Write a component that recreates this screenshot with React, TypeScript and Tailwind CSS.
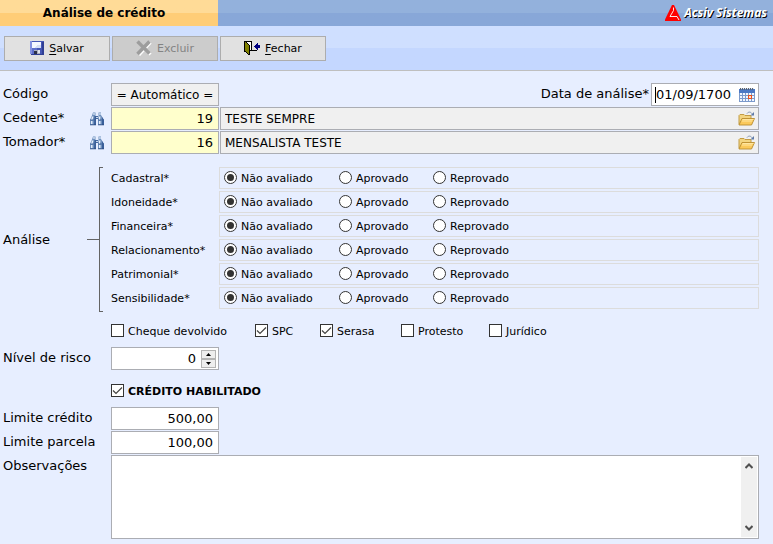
import type { ReactNode } from "react";

const fieldBox = "h-[23px] border border-[#abadb3] leading-5 text-black outline-none";

function SaveIcon() {
  return (
    <svg width="14" height="14" viewBox="0 0 14 14" shapeRendering="crispEdges" aria-hidden="true">
      <path d="M0 0h14v14H1l-1-1z" fill="#4456b4" />
      <path d="M0 0h2v13H0z" fill="#8391e0" />
      <path d="M2 7h5v7H2z" fill="#5d6ecb" />
      <path d="M12 1h2v13h-2zM1 13h13v1H1z" fill="#303f94" />
      <path d="M2 1h9v6H2z" fill="#f4f7ff" />
      <path d="M7 4h4v3H5z" fill="#d5def5" />
      <path d="M4 9h6v4H4z" fill="#a9adbd" />
      <path d="M4 10h3v3H4z" fill="#2b3047" />
      <path d="M8 9h2v3H8z" fill="#dfe3ee" />
    </svg>
  );
}

function DeleteIcon() {
  return (
    <svg width="16" height="16" viewBox="0 0 16 16" aria-hidden="true">
      <path d="M3 3l11.500 11.500M14.500 2.500L3 15" stroke="#ffffff" strokeWidth="3" fill="none" />
      <path d="M1.500 1.500L13.500 13.500M13.500 1.500L1.500 14" stroke="#9d9d9d" strokeWidth="3.500" fill="none" />
    </svg>
  );
}

function ExitIcon() {
  return (
    <svg width="16" height="16" viewBox="0 0 16 16" shapeRendering="crispEdges" aria-hidden="true">
      <path d="M0 1h8v1H0zM0 1h1v11H0zM7 1h1v10H7zM5 10h8v1H5z" fill="#000" />
      <path d="M3 2h4v8H3z" fill="#fff" />
      <path d="M1 2h1v1h1v1h1v1h1v9H4v-1H3v-1H2v-1H1z" fill="#808000" />
      <path d="M2 2h1v1H2zM3 3h1v1H3zM4 4h1v1H4zM5 5h1v10H5zM1 11h1v1H1zM2 12h1v1H2zM3 13h1v1H3zM4 14h1v1H4z" fill="#000" />
      <path d="M10 6h1V5h1V4h1V3h1v2h2v3h-2v2h-1V9h-1V8h-1V7h-1z" fill="#000080" />
    </svg>
  );
}

function BinocularsIcon() {
  return (
    <svg width="16" height="14" viewBox="0 0 16 14" aria-hidden="true">
      <path d="M4 0.500h2.500v3L7 7v6H1V8l2-4.500zM9.500 0.500H12V3l3 5v5H9V7l0.500-3z" fill="#6e8fbd" />
      <path d="M4 1h2v2H4zM10 1h2v2h-2z" fill="#b4c8e2" />
      <path d="M3 4.500h1.500L3.500 8H2zM10 4.500h1.500L11 8h-1z" fill="#e6effa" />
      <path d="M2 9h1.500v3H2zM10 9h1.500v3H10z" fill="#e3edf9" />
      <path d="M5.500 4H7v9H5zM13 5l2 3v5h-2z" fill="#3a5f99" />
      <path d="M7 4h2v3H7z" fill="#44689f" />
      <path d="M7 5h2v1H7z" fill="#c9d9ee" />
      <path d="M1 8h6M9 8h6" stroke="#3f639b" strokeWidth="0.800" />
      <path d="M1 12.500h6v0.800H1zM9 12.500h6v0.800H9z" fill="#2b4b80" />
    </svg>
  );
}

function FolderIcon() {
  return (
    <svg width="17" height="15" viewBox="0 0 17 15" aria-hidden="true">
      <path d="M1 13.500V4.500l1-1h4l1 1h6v3" fill="#f3d581" stroke="#c29c45" />
      <path d="M1 14l3-6.500h12.500l-3 6.500z" fill="#fbc95a" stroke="#b98c2f" strokeWidth="0.900" />
      <path d="M4.500 8.500h11M3.800 10h10.500" stroke="#ffe6a0" />
      <path d="M9 2.500c1.500-2 4-2 5.500 1" fill="none" stroke="#8497b5" />
      <path d="M12.500 4.500H16V1z" fill="#5f7ba8" />
    </svg>
  );
}

function CalendarIcon() {
  return (
    <svg width="16" height="14" viewBox="0 0 16 14" shapeRendering="crispEdges" aria-hidden="true">
      <path d="M0 1h16v13H0z" fill="#7c9acb" />
      <path d="M0 1h16v4H0z" fill="#4b78c4" />
      <path d="M1 0h1v2H1zM3 0h1v2H3zM5 0h1v2H5zM7 0h1v2H7zM9 0h1v2H9zM11 0h1v2h-1zM13 0h1v2h-1z" fill="#5b6470" />
      <path d="M2 0h1v1H2zM4 0h1v1H4zM6 0h1v1H6zM8 0h1v1H8zM10 0h1v1h-1zM12 0h1v1h-1zM14 0h1v1h-1z" fill="#e6ebf3" />
      {[5, 8, 11].map((y) =>
        [1, 4, 7, 10, 13].map((x) => <rect key={`${x}-${y}`} x={x} y={y} width="2" height="2" fill="#f2f7ff" />),
      )}
      <path d="M9 7h4v4H9z" fill="#e8501e" />
      <path d="M10 8h2v2h-2z" fill="#ffe1cf" />
    </svg>
  );
}

function LogoIcon() {
  return (
    <svg width="16" height="16" viewBox="0 0 16 16" aria-hidden="true">
      <path d="M7 0h2l7 14.500V16H0v-1.500z" fill="#ff0000" />
      <path d="M8.500 2.500v3L5 11.500h7l2 3.500" fill="none" stroke="#ffffff" strokeWidth="0.900" />
    </svg>
  );
}

function ToolButton({ icon, hotkey, rest, disabled }: { icon: ReactNode; hotkey: string; rest: string; disabled?: boolean }) {
  return (
    <button
      type="button"
      disabled={disabled}
      className="flex h-[25px] w-[106px] items-center justify-center gap-[5px] border border-[#adadad] bg-[#e1e1e1] pb-px text-[11px] text-black disabled:bg-[#cccccc] disabled:text-[#838383]"
    >
      {icon}
      <span className="pt-[3px]">
        <span className="underline underline-offset-2">{hotkey}</span>
        {rest}
      </span>
    </button>
  );
}

function Row({ label, htmlFor, children }: { label: string; htmlFor?: string; children: ReactNode }) {
  return (
    <div className="flex">
      <label htmlFor={htmlFor} className="h-[23px] w-[108px] shrink-0 text-[13px] leading-[22px]">
        {label}
      </label>
      {children}
    </div>
  );
}

function LookupRow({ id, label, code, name }: { id: string; label: string; code: string; name: string }) {
  return (
    <div className="flex">
      <label htmlFor={id} className="w-[86px] shrink-0 text-[13px] leading-[22px]">
        {label}
      </label>
      <button type="button" aria-label={`Procurar ${label}`} className="flex w-[22px] shrink-0 items-center">
        <BinocularsIcon />
      </button>
      <input id={id} defaultValue={code} className={`${fieldBox} w-[108px] bg-[#ffffcc] pr-[5px] text-right text-[13px]`} />
      <div className="ml-px flex h-[23px] flex-1 items-center border border-[#abadb3] bg-[#f0f0f0] pr-[3px]">
        <input readOnly aria-label={`Nome ${label}`} defaultValue={name} className="h-5 min-w-0 flex-1 pl-1 text-[12px] outline-none" />
        <button type="button" aria-label={`Abrir ${label}`}>
          <FolderIcon />
        </button>
      </div>
    </div>
  );
}

function Radio({ name, label, checked, width }: { name: string; label: string; checked?: boolean; width: string }) {
  return (
    <label className={`flex items-start gap-1 pt-[3px] leading-4 ${width}`}>
      <span className="grid place-items-center">
        <input
          type="radio"
          name={name}
          defaultChecked={checked}
          className="peer col-start-1 row-start-1 size-[13px] appearance-none rounded-full border border-[#333333] bg-white"
        />
        <span className="pointer-events-none col-start-1 row-start-1 hidden size-[7px] rounded-full bg-[#333333] peer-checked:block" />
      </span>
      {label}
    </label>
  );
}

function Check({ label, checked, className = "" }: { label: string; checked?: boolean; className?: string }) {
  return (
    <label className={`flex items-start gap-1 pt-[2px] text-[11px] leading-4 ${className}`}>
      <span className="grid place-items-center">
        <input
          type="checkbox"
          defaultChecked={checked}
          className="peer col-start-1 row-start-1 size-[13px] appearance-none border border-[#333333] bg-white"
        />
        <svg width="11" height="11" viewBox="0 0 11 11" className="pointer-events-none col-start-1 row-start-1 hidden peer-checked:block" aria-hidden="true">
          <path d="M1 5.500l3 3 6-6" fill="none" stroke="#444444" strokeWidth="1.200" />
        </svg>
      </span>
      {label}
    </label>
  );
}

const criteria = ["Cadastral", "Idoneidade", "Financeira", "Relacionamento", "Patrimonial", "Sensibilidade"];

export default function App() {
  return (
    <div className="min-h-screen bg-[#e7eeff] font-['DejaVu_Sans',Verdana,sans-serif] text-black">
      <header className="flex h-[26px] bg-linear-to-b from-[#93b1dc] from-50% to-[#88a7d8] to-50%">
        <h1 className="w-[218px] bg-linear-to-b from-[#ffdb97] from-50% to-[#ffcd77] to-50% pr-[10px] text-center text-[12px] leading-[26px] font-bold">
          Análise de crédito
        </h1>
        <div className="flex flex-1 items-center justify-end gap-[3px] pr-[6px]">
          <LogoIcon />
          <span className="font-['Noto_Sans',sans-serif] text-[12px] leading-6 font-bold text-white italic [text-shadow:1px_1px_0_#000]">Acsiv Sistemas</span>
        </div>
      </header>

      <div className="flex h-[45px] gap-[2px] border-b border-[#bfbfbf] bg-linear-to-b from-[#cfdfff] from-50% to-[#c4d7ff] to-50% pt-[10px] pl-1">
        <ToolButton icon={<SaveIcon />} hotkey="S" rest="alvar" />
        <ToolButton icon={<DeleteIcon />} hotkey="" rest="Excluir" disabled />
        <ToolButton icon={<ExitIcon />} hotkey="F" rest="echar" />
      </div>

      <form className="pt-3 pr-[14px] pl-[3px]">
        <div className="flex flex-col gap-px">
          <Row label="Código" htmlFor="codigo">
            <input id="codigo" readOnly defaultValue="= Automático =" className={`${fieldBox} w-[108px] bg-[#f0f0f0] text-center text-[12px]`} />
            <label htmlFor="data" className="ml-auto pr-[2px] text-[13px] leading-[22px]">
              Data de análise*
            </label>
            <div className="flex h-[23px] w-[108px] items-center border border-[#abadb3] bg-white pr-[3px] pl-[3px]">
              <input id="data" defaultValue="01/09/1700" className="h-4 min-w-0 flex-1 bg-linear-to-r from-black from-[1px] to-transparent to-[1px] bg-no-repeat pl-px text-[13px] outline-none" />
              <button type="button" aria-label="Calendário">
                <CalendarIcon />
              </button>
            </div>
          </Row>
          <LookupRow id="cedente" label="Cedente*" code="19" name="TESTE SEMPRE" />
          <LookupRow id="tomador" label="Tomador*" code="16" name="MENSALISTA TESTE" />
        </div>

        <div className="mt-[13px] flex items-stretch">
          <div className="flex w-[84px] items-center text-[13px]">Análise</div>
          <div className="flex w-3 items-center">
            <div className="h-px w-full bg-[#646464]" />
          </div>
          <div className="w-1 border-y border-l border-[#646464]" />
          <div className="flex flex-1 flex-col gap-[2px] pb-[3px] pl-2 text-[11px]">
            {criteria.map((name) => (
              <div key={name} role="radiogroup" aria-label={name} className="flex h-[22px]">
                <div className="w-[108px] leading-6">{name}*</div>
                <div className="flex flex-1 border border-[#dcdcdc] pl-1">
                  <Radio name={name} label="Não avaliado" width="w-[115px]" checked />
                  <Radio name={name} label="Aprovado" width="w-[94px]" />
                  <Radio name={name} label="Reprovado" width="w-[94px]" />
                </div>
              </div>
            ))}
          </div>
        </div>

        <div className="mt-[10px] flex h-[17px] pl-[108px]">
          <Check label="Cheque devolvido" className="w-[144px]" />
          <Check label="SPC" checked className="w-[65px]" />
          <Check label="Serasa" checked className="w-[81px]" />
          <Check label="Protesto" className="w-[88px]" />
          <Check label="Jurídico" />
        </div>

        <div className="mt-2">
          <Row label="Nível de risco" htmlFor="nivel">
            <div className="flex h-[23px] w-[108px] items-center border border-[#abadb3] bg-white pr-[2px]">
              <input id="nivel" defaultValue="0" className="h-5 min-w-0 flex-1 pr-[5px] text-right text-[13px] outline-none" />
              <div className="flex flex-col">
                <button type="button" aria-label="Aumentar" className="flex h-[9px] w-[15px] items-center justify-center border border-[#b4b4b4] bg-[#eeeeee]">
                  <svg width="5" height="3" viewBox="0 0 5 3" aria-hidden="true"><path d="M0 3L2.500 0 5 3z" /></svg>
                </button>
                <button type="button" aria-label="Diminuir" className="flex h-[9px] w-[15px] items-center justify-center border border-[#b4b4b4] bg-[#eeeeee]">
                  <svg width="5" height="3" viewBox="0 0 5 3" aria-hidden="true"><path d="M0 0L2.500 3 5 0z" /></svg>
                </button>
              </div>
            </div>
          </Row>
        </div>

        <div className="mt-3 flex h-[17px] pl-[108px]">
          <Check label="CRÉDITO HABILITADO" checked className="font-bold" />
        </div>

        <div className="mt-2 flex flex-col gap-px">
          <Row label="Limite crédito" htmlFor="limite">
            <input id="limite" defaultValue="500,00" className={`${fieldBox} w-[108px] bg-white pr-[5px] text-right text-[13px]`} />
          </Row>
          <Row label="Limite parcela" htmlFor="parcela">
            <input id="parcela" defaultValue="100,00" className={`${fieldBox} w-[108px] bg-white pr-[5px] text-right text-[13px]`} />
          </Row>
          <Row label="Observações" htmlFor="obs">
            <div className="flex h-[84px] flex-1 border border-[#abadb3] bg-white p-px">
              <textarea id="obs" className="min-w-0 flex-1 resize-none text-[13px] outline-none" />
              <div className="flex w-4 flex-col justify-between bg-[#f0f0f0] py-1">
                <button type="button" aria-label="Rolar para cima" className="flex h-[10px] items-center justify-center">
                  <svg width="8" height="6" viewBox="0 0 8 6" aria-hidden="true"><path d="M0.500 5L4 1.500 7.500 5" fill="none" stroke="#505050" strokeWidth="2" /></svg>
                </button>
                <button type="button" aria-label="Rolar para baixo" className="flex h-[10px] items-center justify-center">
                  <svg width="8" height="6" viewBox="0 0 8 6" aria-hidden="true"><path d="M0.500 1L4 4.500 7.500 1" fill="none" stroke="#505050" strokeWidth="2" /></svg>
                </button>
              </div>
            </div>
          </Row>
        </div>
      </form>
    </div>
  );
}
